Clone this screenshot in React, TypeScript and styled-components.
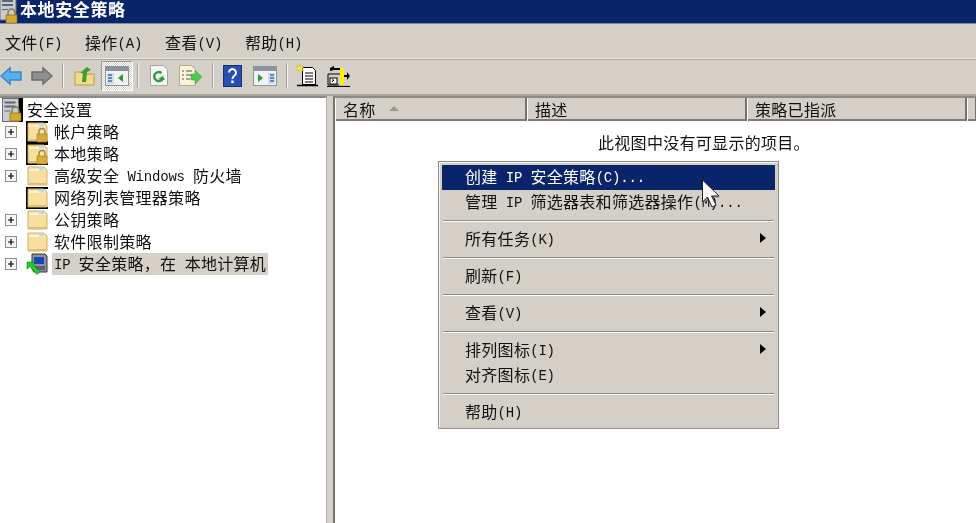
import React from "react";
import styled, { createGlobalStyle } from "styled-components";

const Global = createGlobalStyle`
  html, body { margin: 0; padding: 0; background: #d4d0c8; }
`;

const Page = styled.div`
  position: relative;
  width: 976px;
  height: 523px;
  overflow: hidden;
  display: flex;
  flex-direction: column;
  background: #d4d0c8;
  color: #111;
  font-family: "Noto Sans CJK SC", "Liberation Mono", monospace;
  font-size: 16px;
  letter-spacing: 0.3px;
  line-height: 22px;
  white-space: pre;
  filter: blur(0.4px);
`;

const Latin = styled.span`
  font-family: "Liberation Mono", monospace;
  font-size: 14px;
  letter-spacing: -0.2px;
  position: relative;
  top: -1px;
`;

const Mixed = ({ text }: { text: string }) => (
  <>
    {text.split(/([\x20-\x7e]+)/).map((part, i) =>
      i % 2 ? <Latin key={i}>{part}</Latin> : part
    )}
  </>
);

const TitleBar = styled.div`
  height: 23px;
  display: flex;
  align-items: center;
  background: #0a246a;
  border-bottom: 1px solid #7f8ca8;
  color: #fff;
  font-weight: 700;
  font-size: 17px;
  letter-spacing: 0.6px;
`;
const TitleText = styled.span`
  line-height: 18px;
  margin-top: -5px;
`;
const TitleIcon = styled.svg`
  width: 18px;
  height: 23px;
  margin-right: 2px;
  flex: none;
`;

const MenuBar = styled.div`
  height: 35px;
  display: flex;
  align-items: center;
  padding: 5px 0 0 5px;
  box-sizing: border-box;
  border-bottom: 1px solid #ecebe6;
`;
const MenuItem = styled.div`
  width: 80px;
`;

const Toolbar = styled.div`
  height: 37px;
  display: flex;
  align-items: center;
  box-sizing: border-box;
  padding-bottom: 3px;
  border-top: 1px solid #a8a59e;
  border-bottom: 2px solid #a8a59e;
`;
const Slot = styled.div<{ $w: number; $ml?: number; $pressed?: boolean }>`
  width: ${(p) => p.$w}px;
  margin-left: ${(p) => p.$ml ?? 0}px;
  height: 30px;
  display: flex;
  align-items: center;
  justify-content: center;
  flex: none;
  box-sizing: border-box;
  ${(p) =>
    p.$pressed
      ? `background: repeating-conic-gradient(#ffffff 0% 25%, #d4d0c8 0% 50%) 0 0 / 2px 2px;
         border: 1px solid; border-color: #a09d96 #fff #fff #a09d96;`
      : ""}
`;
const ToolSep = styled.div<{ $ml: number }>`
  width: 2px;
  height: 25px;
  margin-left: ${(p) => p.$ml}px;
  flex: none;
  background: #a5a29b;
  border-right: 1px solid #f4f3ef;
  box-sizing: border-box;
`;

const Main = styled.div`
  flex: 1;
  display: flex;
  min-height: 0;
`;
const TreePane = styled.div`
  width: 327px;
  flex: none;
  background: #fff;
  box-sizing: border-box;
  border-right: 1px solid #b4b2ac;
  border-top: 2px solid #8d8a84;
  padding-top: 1px;
`;
const Splitter = styled.div`
  width: 6px;
  flex: none;
  background: #d4d0c8;
`;
const ListPane = styled.div`
  flex: 1;
  background: #fff;
  border-left: 2px solid #77746e;
  border-top: 2px solid #8d8a84;
  display: flex;
  flex-direction: column;
  min-width: 0;
`;

const TreeRow = styled.div<{ $root?: boolean }>`
  height: 22px;
  display: flex;
  align-items: center;
  padding-left: ${(p) => (p.$root ? 2 : 5)}px;
`;
const Expander = styled.div<{ $empty?: boolean }>`
  width: 12px;
  height: 12px;
  flex: none;
  margin-right: 9px;
  box-sizing: border-box;
  ${(p) => (p.$empty ? "" : "border: 1px solid #8f8f8f; background: #f4f4f4;")}
  display: flex;
  align-items: center;
  justify-content: center;
  color: #000;
`;
const NodeIcon = styled.svg`
  width: 22px;
  height: 22px;
  flex: none;
  margin-right: 6px;
  overflow: visible;
`;
const RootIcon = styled.svg`
  width: 21px;
  height: 24px;
  flex: none;
  margin-right: 4px;
`;
const TreeLabel = styled.span<{ $selected?: boolean }>`
  height: 22px;
  line-height: 20px;
  padding: 0 2px;
  margin-left: -2px;
  ${(p) => (p.$selected ? "background: #d4d0c8;" : "")}
`;

const ListHeader = styled.div`
  height: 23px;
  flex: none;
  display: flex;
  background: #d4d0c8;
  border-bottom: 2px solid #7f7c76;
  box-sizing: border-box;
`;
const Column = styled.div<{ $w?: number }>`
  ${(p) => (p.$w ? `width: ${p.$w}px;` : "flex: 1;")}
  flex-shrink: 0;
  height: 23px;
  line-height: 25px;
  display: flex;
  align-items: center;
  box-sizing: border-box;
  padding-left: 7px;
  border-left: 1px solid #fff;
  border-right: 2px solid #76736d;
  min-width: 0;
`;
const SortMark = styled.span`
  width: 0;
  height: 0;
  margin: 0 0 2px 13px;
  border-left: 5px solid transparent;
  border-right: 5px solid transparent;
  border-bottom: 5px solid #9a9790;
`;
const EmptyNote = styled.div`
  padding: 10px 0 0 263px;
`;

const ContextMenu = styled.div`
  position: absolute;
  left: 438px;
  top: 161px;
  width: 341px;
  height: 268px;
  box-sizing: border-box;
  padding: 3px;
  background: #d4d0c8;
  border: 1px solid #8f8d88;
  box-shadow: inset 1px 1px 0 #f4f3ef;
`;
const MenuRow = styled.div<{ $active?: boolean }>`
  height: 25px;
  display: flex;
  align-items: center;
  justify-content: space-between;
  padding: 0 9px 0 23px;
  ${(p) => (p.$active ? "background: #0a246a; color: #fff;" : "")}
`;
const MenuSep = styled.div`
  height: 2px;
  margin: 5px 1px;
  background: #8e8b85;
  border-bottom: 1px solid #fff;
  box-sizing: border-box;
`;
const Caret = styled.span`
  width: 0;
  height: 0;
  margin-bottom: 3px;
  border-top: 5px solid transparent;
  border-bottom: 5px solid transparent;
  border-left: 6px solid #000;
`;
const Pointer = styled.svg`
  position: absolute;
  left: 701px;
  top: 179px;
  width: 21px;
  height: 31px;
`;

const Folder = ({ lock, black }: { lock?: boolean; black?: boolean }) => (
  <NodeIcon viewBox="0 0 22 22">
    {black && <path d="M0 0h22v2H2v18h20v2H0z" fill="#000" />}
    <path d="M2 2h16l3 3v15H2z" fill="#f8df9e" stroke="#d0b070" strokeWidth="1" />
    <path d="M3 4h16v2H3z" fill="#fdf3d0" />
    <path d="M13 2.500h5v3h-5z" fill="#bcd9ef" />
    <path d="M3 18h17v1.500H3z" fill="#dcbc78" />
    {lock && (
      <g>
        <path d="M13 13v-2.500a3 3 0 0 1 6 0V13" fill="none" stroke="#9a8a58" strokeWidth="1.400" />
        <rect x="11" y="13" width="10" height="8" fill="#d9ab3c" stroke="#a8841c" strokeWidth="0.700" />
      </g>
    )}
  </NodeIcon>
);

const IpIcon = () => (
  <NodeIcon viewBox="0 0 22 22">
    <path d="M6 1h13l2 2v16H8l-2-3z" fill="#8d949c" stroke="#333" strokeWidth="1" />
    <rect x="8" y="4" width="10" height="7" fill="#1844b8" />
    <path d="M8 13h11v4H8z" fill="#5a6068" />
    <path d="M1 9 L1 16 L4 13.500 L11 21.500 L14 19 L7 11.500 L9 9z" fill="#1fcf2a" stroke="#0a7a12" strokeWidth="0.600" />
  </NodeIcon>
);

const Plus = () => (
  <svg width="10" height="10" viewBox="0 0 10 10">
    <path d="M2 5h6M5 2v6" stroke="#000" strokeWidth="1.200" />
  </svg>
);

const Server = () => (
  <>
    <path d="M0 0h16v23H0z" fill="#c8ccd2" stroke="#6a7078" strokeWidth="1" />
    <path d="M2 3h11v2H2zM2 7h11v2H2z" fill="#60666e" />
    <path d="M2 12h6v1H2z" fill="#60666e" />
  </>
);
const Padlock = ({ x, y }: { x: number; y: number }) => (
  <g transform={`translate(${x} ${y})`}>
    <path d="M2 6V3.500a3.500 3.500 0 0 1 7 0V6" fill="none" stroke="#8a7a48" strokeWidth="1.500" />
    <rect x="0" y="6" width="11" height="8" fill="#dba92e" stroke="#8a6a14" strokeWidth="0.700" />
  </g>
);

const Ic = styled.svg`
  display: block;
  flex: none;
`;

const Arrow = ({ dir, c1, c2 }: { dir: "l" | "r"; c1: string; c2: string }) => (
  <Ic width="22" height="20" viewBox="0 0 22 20">
    <path
      d="M1 10 L10 2 V6 H21 V14 H10 V18 Z"
      transform={dir === "r" ? "matrix(-1 0 0 1 22 0)" : undefined}
      fill={c1}
      stroke={c2}
      strokeWidth="1.500"
    />
  </Ic>
);

const UpFolder = () => (
  <Ic width="21" height="21" viewBox="0 0 21 21">
    <path d="M1 7h6l2 2h11v11H1z" fill="#f5d98a" stroke="#b99a52" />
    <path d="M8 17 L9 8 L6 8 L13 2 L17 5 L13 7 L12 17z" fill="#3f9c2e" />
  </Ic>
);

const Win = ({ tone }: { tone: "l" | "r" }) => (
  <Ic width="24" height="20" viewBox="0 0 24 20">
    <rect x="0.500" y="0.500" width="23" height="19" fill="#f0f2f4" stroke="#8a949e" />
    <rect x="1" y="1" width="22" height="4" fill="#8a949e" />
    {tone === "l" ? (
      <>
        <path d="M2 7h7v11H2z" fill="#cfdcea" />
        <path d="M3 9h4M3 12h4M3 15h4" stroke="#3a6ea8" strokeWidth="1.500" />
        <path d="M18 8v8l-5-4z" fill="#2f9a2f" />
      </>
    ) : (
      <>
        <path d="M15 7h7v11h-7z" fill="#cfdcea" />
        <path d="M17 9h4M17 12h4M17 15h4" stroke="#3a6ea8" strokeWidth="1.500" />
        <path d="M5 8v8l5-4z" fill="#2f9a2f" />
      </>
    )}
  </Ic>
);

const Refresh = () => (
  <Ic width="18" height="21" viewBox="0 0 18 21">
    <path d="M0.500 0.500h13l4 4v16h-17z" fill="#f6f6f4" stroke="#a6a6a0" />
    <path d="M13 13a4.500 4.500 0 1 1-1.500-5" fill="none" stroke="#2f9a3a" strokeWidth="2.400" />
    <path d="M8 14l5-3 2 4z" fill="#2f9a3a" />
  </Ic>
);

const Export = () => (
  <Ic width="23" height="21" viewBox="0 0 23 21">
    <path d="M0.500 0.500h12l4 4v16h-16z" fill="#fbf3d8" stroke="#b0aa98" />
    <path d="M3 6h2M7 6h6M3 10h2M7 10h5M3 14h2M7 14h4" stroke="#555" strokeWidth="1.200" />
    <path d="M12 9h4V5l7 7-7 7v-4h-4z" fill="#4fc84f" stroke="#3f9c3f" strokeWidth="0.500" />
  </Ic>
);

const Help = () => (
  <Ic width="19" height="22" viewBox="0 0 19 22">
    <rect x="0.500" y="0.500" width="18" height="21" fill="#2a4fb0" stroke="#1a2f78" />
    <path d="M6 7.500a3.500 3.500 0 1 1 5.500 3c-1.500 1-2 1.500-2 3.500" fill="none" stroke="#fff" strokeWidth="2" />
    <rect x="8.300" y="15.500" width="2.400" height="2.600" fill="#fff" />
  </Ic>
);

const NewDoc = () => (
  <Ic width="23" height="23" viewBox="0 0 23 23">
    <path d="M6.500 3.500h10l3 3v14h-13z" fill="#fff" stroke="#000" />
    <path d="M9 9h8M9 12h8M9 15h8M9 18h8" stroke="#000" />
    <path d="M1 21.500h21" stroke="#000" strokeWidth="1.500" />
    <path d="M4 0l1 3 3-1-2 3 2 2-3-.5L4 9l-1-2.500L0 7l2-2-2-3 3 1z" fill="#f5ea3a" stroke="#c8b820" strokeWidth="0.400" />
  </Ic>
);

const Props = () => (
  <Ic width="23" height="22" viewBox="0 0 23 22">
    <path d="M1 9h12M1 9v11h11" fill="none" stroke="#000" />
    <rect x="3" y="13" width="7" height="6" fill="#fff" stroke="#000" />
    <path d="M5 17l2-2M7 15h-2" stroke="#000" />
    <rect x="13" y="3" width="4" height="17" fill="#ffee00" />
    <path d="M3 6V3l4-2v4z" fill="#000" />
    <path d="M7 3h6v2H7z" fill="#000" />
    <path d="M17 10h3V7l3 4-3 4v-3h-3z" fill="#000" />
    <path d="M0 21.500h23" stroke="#000" strokeWidth="1.200" />
  </Ic>
);

const treeItems: { label: string; lock?: boolean; black?: boolean; noBox?: boolean }[] = [
  { label: "帐户策略", lock: true, black: true },
  { label: "本地策略", lock: true, black: true },
  { label: "高级安全 Windows 防火墙" },
  { label: "网络列表管理器策略", black: true, noBox: true },
  { label: "公钥策略" },
  { label: "软件限制策略" },
];

export default function App() {
  return (
    <Page>
      <Global />
      <TitleBar>
        <TitleIcon viewBox="0 0 18 23">
          <g transform="translate(0 -3)"><Server /></g>
          <Padlock x={6} y={9} />
        </TitleIcon>
        <TitleText>本地安全策略</TitleText>
      </TitleBar>
      <MenuBar>
        <MenuItem><Mixed text="文件(F)" /></MenuItem>
        <MenuItem><Mixed text="操作(A)" /></MenuItem>
        <MenuItem><Mixed text="查看(V)" /></MenuItem>
        <MenuItem><Mixed text="帮助(H)" /></MenuItem>
      </MenuBar>
      <Toolbar>
        <Slot $w={22}><Arrow dir="l" c1="#58b0ec" c2="#3a86cc" /></Slot>
        <Slot $w={22} $ml={9}><Arrow dir="r" c1="#8f8f8f" c2="#6e6e6e" /></Slot>
        <ToolSep $ml={9} />
        <Slot $w={21} $ml={10}><UpFolder /></Slot>
        <Slot $w={32} $ml={6} $pressed><Win tone="l" /></Slot>
        <ToolSep $ml={4} />
        <Slot $w={18} $ml={11}><Refresh /></Slot>
        <Slot $w={23} $ml={11}><Export /></Slot>
        <ToolSep $ml={10} />
        <Slot $w={19} $ml={9}><Help /></Slot>
        <Slot $w={24} $ml={11}><Win tone="r" /></Slot>
        <ToolSep $ml={9} />
        <Slot $w={23} $ml={8}><NewDoc /></Slot>
        <Slot $w={23} $ml={8}><Props /></Slot>
      </Toolbar>
      <Main>
        <TreePane>
          <TreeRow $root>
            <RootIcon viewBox="0 0 21 24">
              <rect width="21" height="24" fill="#000" />
              <g transform="translate(0.500 0.500)"><Server /></g>
              <Padlock x={8} y={9} />
            </RootIcon>
            <TreeLabel>安全设置</TreeLabel>
          </TreeRow>
          {treeItems.map((t) => (
            <TreeRow key={t.label}>
              <Expander $empty={t.noBox}>{!t.noBox && <Plus />}</Expander>
              <Folder lock={t.lock} black={t.black} />
              <TreeLabel><Mixed text={t.label} /></TreeLabel>
            </TreeRow>
          ))}
          <TreeRow>
            <Expander><Plus /></Expander>
            <IpIcon />
            <TreeLabel $selected><Mixed text={"IP 安全策略\uFF0C在 本地计算机"} /></TreeLabel>
          </TreeRow>
        </TreePane>
        <Splitter />
        <ListPane>
          <ListHeader>
            <Column $w={192}>名称<SortMark /></Column>
            <Column $w={220}>描述</Column>
            <Column $w={220}>策略已指派</Column>
            <Column />
          </ListHeader>
          <EmptyNote>此视图中没有可显示的项目。</EmptyNote>
        </ListPane>
      </Main>
      <ContextMenu>
        <MenuRow $active><span><Mixed text="创建 IP 安全策略(C)..." /></span></MenuRow>
        <MenuRow><span><Mixed text="管理 IP 筛选器表和筛选器操作(M)..." /></span></MenuRow>
        <MenuSep />
        <MenuRow><span><Mixed text="所有任务(K)" /></span><Caret /></MenuRow>
        <MenuSep />
        <MenuRow><span><Mixed text="刷新(F)" /></span></MenuRow>
        <MenuSep />
        <MenuRow><span><Mixed text="查看(V)" /></span><Caret /></MenuRow>
        <MenuSep />
        <MenuRow><span><Mixed text="排列图标(I)" /></span><Caret /></MenuRow>
        <MenuRow><span><Mixed text="对齐图标(E)" /></span></MenuRow>
        <MenuSep />
        <MenuRow><span><Mixed text="帮助(H)" /></span></MenuRow>
      </ContextMenu>
      <Pointer viewBox="0 0 21 31">
        <path d="M3 3 V24 L8 20 L12 29 L16 27 L12 19 H19 Z" fill="#8a8a8a" opacity="0.5" />
        <path d="M1.500 1 V23 L6.500 18 L11 28 L15 26 L10.500 17 H18 Z" fill="#fff" stroke="#222" strokeWidth="1" />
      </Pointer>
    </Page>
  );
}
